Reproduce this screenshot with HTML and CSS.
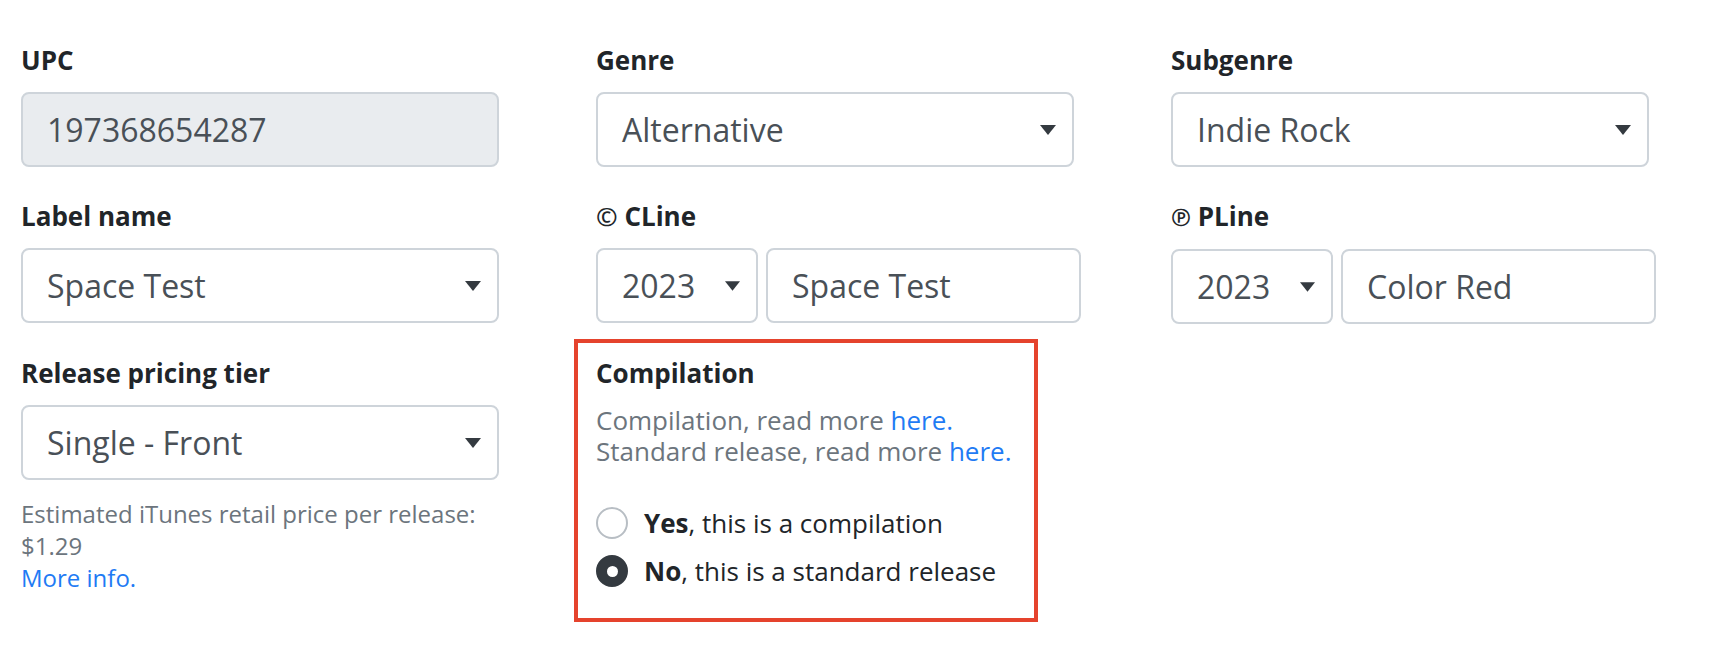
FILE: index.html
```html
<!DOCTYPE html>
<html lang="en">
<head>
<meta charset="UTF-8" />
<meta name="viewport" content="width=device-width, initial-scale=1" />
<title>Release details</title>
<link rel="stylesheet" href="styles.css">
</head>
<body>

<div class="form-grid">
  <div class="field">
    <div class="field-label">UPC</div>
    <div class="control disabled">197368654287</div>
  </div>

  <div class="field">
    <div class="field-label">Genre</div>
    <div class="control select">
      <span>Alternative</span>
      <svg class="caret" width="16" height="10" viewBox="0 0 16 10"><polygon points="0,0 16,0 8,10" /></svg>
    </div>
  </div>

  <div class="field">
    <div class="field-label">Subgenre</div>
    <div class="control select">
      <span>Indie Rock</span>
      <svg class="caret" width="16" height="10" viewBox="0 0 16 10"><polygon points="0,0 16,0 8,10" /></svg>
    </div>
  </div>

  <div class="field">
    <div class="field-label">Label name</div>
    <div class="control select">
      <span>Space Test</span>
      <svg class="caret" width="16" height="10" viewBox="0 0 16 10"><polygon points="0,0 16,0 8,10" /></svg>
    </div>
  </div>

  <div class="field">
    <div class="field-label"><span class="sym">©</span> CLine</div>
    <div class="input-pair">
      <div class="control select year">
        <span>2023</span>
        <svg class="caret" width="15" height="10" viewBox="0 0 16 10"><polygon points="0,0 16,0 8,10" /></svg>
      </div>
      <div class="control text">Space Test</div>
    </div>
  </div>

  <div class="field">
    <div class="field-label"><span class="sym small">℗</span> PLine</div>
    <div class="input-pair">
      <div class="control select year">
        <span>2023</span>
        <svg class="caret" width="15" height="10" viewBox="0 0 16 10"><polygon points="0,0 16,0 8,10" /></svg>
      </div>
      <div class="control text">Color Red</div>
    </div>
  </div>

  <div class="field">
    <div class="field-label">Release pricing tier</div>
    <div class="control select">
      <span>Single - Front</span>
      <svg class="caret" width="16" height="10" viewBox="0 0 16 10"><polygon points="0,0 16,0 8,10" /></svg>
    </div>
    <div class="help price-help">
      Estimated iTunes retail price per release:<br>
      $1.29<br>
      <a href="#">More info.</a>
    </div>
  </div>

  <div class="field highlight">
    <div class="field-label">Compilation</div>
    <div class="help">
      Compilation, read more <a href="#">here.</a><br>
      Standard release, read more <a href="#">here.</a>
    </div>
    <div class="radios">
      <div class="radio">
        <span class="dot"></span>
        <span><b>Yes</b>, this is a compilation</span>
      </div>
      <div class="radio">
        <span class="dot checked"></span>
        <span><b>No</b>, this is a standard release</span>
      </div>
    </div>
  </div>
</div>

</body>
</html>
```

FILE: styles.css
```css
body {
  margin: 0;
  padding: 42px 21px 0;
  background: white;
  font-family: "Open Sans", "Noto Sans", "DejaVu Sans", sans-serif;
  color: #212529;
}
.form-grid {
  display: grid;
  grid-template-columns: repeat(3, 478px);
  column-gap: 97px;
  row-gap: 31px;
  align-items: start;
}
.field-label {
  font-size: 26px;
  font-weight: 700;
  line-height: 36px;
  margin-bottom: 14px;
  color: #212529;
}
.sym {
  font-weight: 600;
}
.sym.small {
  font-size: 24px;
  font-weight: 600;
}
.control {
  box-sizing: border-box;
  display: flex;
  align-items: center;
  height: 75px;
  padding: 0 16px 0 24px;
  border: 2px solid #ced4da;
  border-radius: 8px;
  background: white;
  font-size: 32px;
  color: #495057;
  white-space: nowrap;
}
.control.disabled {
  background: #e9ecef;
}
.caret {
  margin-left: auto;
  fill: #343a40;
  flex: none;
}
.input-pair {
  display: flex;
  gap: 8px;
  width: 485px;
}
.control.year {
  width: 162px;
  flex: none;
}
.control.text {
  flex: 1;
}
.help {
  font-size: 26px;
  line-height: 31px;
  color: #6c757d;
}
.price-help {
  margin-top: 18px;
  font-size: 24px;
  line-height: 32px;
}
.help a {
  color: #1f7bf4;
  text-decoration: none;
}
.highlight {
  box-sizing: border-box;
  width: 464px;
  margin: -16px 0 0 -22px;
  padding: 12px 18px 23px;
  border: 4px solid #e5432d;
}
.radios {
  margin-top: 32px;
}
.radio {
  display: flex;
  align-items: center;
  gap: 16px;
  height: 48px;
  font-size: 26px;
  color: #212529;
}
.dot {
  box-sizing: border-box;
  width: 32px;
  height: 32px;
  border: 2px solid #b8bec4;
  border-radius: 50%;
  background: white;
  display: flex;
  align-items: center;
  justify-content: center;
  flex: none;
}
.dot.checked {
  background: #343a40;
  border-color: #343a40;
}
.dot.checked::after {
  content: "";
  width: 11px;
  height: 11px;
  border-radius: 50%;
  background: white;
}
```
